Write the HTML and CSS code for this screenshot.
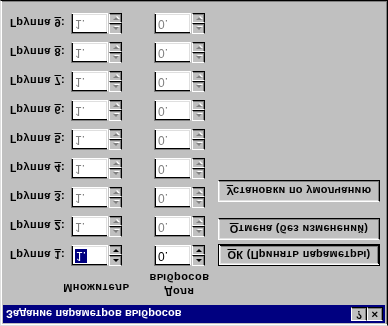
FILE: index.html
```html
<!DOCTYPE html>
<html lang="ru">
<head>
  <meta charset="UTF-8" />
  <title>Задание параметров выбросов</title>
  <link rel="stylesheet" href="styles.css">
</head>
<body>
  <div class="dialog">
    <div class="titlebar">
      <span class="title">Задание параметров выбросов</span>
      <div class="caption">
        <span class="cap-btn">?</span>
        <span class="cap-btn close">&#x2715;</span>
      </div>
    </div>

    <div class="content">
      <div class="groups">
        <div class="head">
          <span class="h-gap"></span>
          <span class="h-col h-mult">Множитель</span>
          <span class="h-col h-share">Доля<br>выбросов</span>
        </div>

        <div class="row">
          <span class="label">Группа <u>1</u>:</span>
          <div class="edit"><span class="sel">1.</span></div>
          <div class="spin"><span class="up"></span><span class="down"></span></div>
          <div class="edit second">0.</div>
          <div class="spin"><span class="up"></span><span class="down"></span></div>
        </div>
        <div class="row off">
          <span class="label">Группа <u>2</u>:</span>
          <div class="edit">1.</div>
          <div class="spin"><span class="up"></span><span class="down"></span></div>
          <div class="edit second">0.</div>
          <div class="spin"><span class="up"></span><span class="down"></span></div>
        </div>
        <div class="row off">
          <span class="label">Группа <u>3</u>:</span>
          <div class="edit">1.</div>
          <div class="spin"><span class="up"></span><span class="down"></span></div>
          <div class="edit second">0.</div>
          <div class="spin"><span class="up"></span><span class="down"></span></div>
        </div>
        <div class="row off">
          <span class="label">Группа <u>4</u>:</span>
          <div class="edit">1.</div>
          <div class="spin"><span class="up"></span><span class="down"></span></div>
          <div class="edit second">0.</div>
          <div class="spin"><span class="up"></span><span class="down"></span></div>
        </div>
        <div class="row off">
          <span class="label">Группа <u>5</u>:</span>
          <div class="edit">1.</div>
          <div class="spin"><span class="up"></span><span class="down"></span></div>
          <div class="edit second">0.</div>
          <div class="spin"><span class="up"></span><span class="down"></span></div>
        </div>
        <div class="row off">
          <span class="label">Группа <u>6</u>:</span>
          <div class="edit">1.</div>
          <div class="spin"><span class="up"></span><span class="down"></span></div>
          <div class="edit second">0.</div>
          <div class="spin"><span class="up"></span><span class="down"></span></div>
        </div>
        <div class="row off">
          <span class="label">Группа <u>7</u>:</span>
          <div class="edit">1.</div>
          <div class="spin"><span class="up"></span><span class="down"></span></div>
          <div class="edit second">0.</div>
          <div class="spin"><span class="up"></span><span class="down"></span></div>
        </div>
        <div class="row off">
          <span class="label">Группа <u>8</u>:</span>
          <div class="edit">1.</div>
          <div class="spin"><span class="up"></span><span class="down"></span></div>
          <div class="edit second">0.</div>
          <div class="spin"><span class="up"></span><span class="down"></span></div>
        </div>
        <div class="row off">
          <span class="label">Группа <u>9</u>:</span>
          <div class="edit">1.</div>
          <div class="spin"><span class="up"></span><span class="down"></span></div>
          <div class="edit second">0.</div>
          <div class="spin"><span class="up"></span><span class="down"></span></div>
        </div>
      </div>

      <div class="actions">
        <div class="btn default"><span><u>О</u>К (Принять параметры)</span></div>
        <div class="btn"><span><u>О</u>тмена (без изменений)</span></div>
        <div class="btn defaults"><span><u>У</u>становки по умолчанию</span></div>
      </div>
    </div>
  </div>
</body>
</html>
```

FILE: styles.css
```css
:root {
  --face: #c0c0c0;
  --light: #dfdfdf;
  --shadow: #808080;
  --dark: #000;
  --navy: #000080;
}

* {
  box-sizing: border-box;
}

body {
  margin: 0;
  background: var(--face);
  font-family: 'Liberation Sans', Arial, sans-serif;
  font-size: 11px;
  font-weight: bold;
  color: #000;
}

/* the capture is mirrored top-to-bottom */
.dialog {
  width: 388px;
  height: 326px;
  background: var(--face);
  border: 1px solid;
  border-color: var(--light) var(--dark) var(--dark) var(--light);
  box-shadow: inset 1px 1px #fff, inset -1px -1px var(--shadow);
  padding: 2px;
  transform: scaleY(-1);
}

.titlebar {
  height: 18px;
  background: var(--navy);
  color: #fff;
  display: flex;
  align-items: center;
  justify-content: space-between;
  padding: 0 2px 0 3px;
}

.title {
  font-size: 11px;
  letter-spacing: 0.1px;
}

.caption {
  display: flex;
}

.cap-btn {
  width: 16px;
  height: 14px;
  background: var(--face);
  color: #000;
  border: 1px solid;
  border-color: #fff var(--dark) var(--dark) #fff;
  box-shadow: inset -1px -1px var(--shadow);
  font-size: 10px;
  line-height: 12px;
  text-align: center;
}

.close {
  font-size: 9px;
}

.content {
  display: flex;
  padding: 6px 0 0 7px;
}

.groups {
  display: flex;
  flex-direction: column;
  gap: 8px;
}

.head {
  height: 30px;
  display: flex;
  margin-bottom: -5px;
  letter-spacing: 0.5px;
}

.h-gap {
  width: 61px;
}

.h-col {
  width: 51px;
  display: flex;
  justify-content: center;
  white-space: nowrap;
  text-align: center;
}

.h-mult {
  padding-top: 5px;
}

.h-share {
  margin-left: 32px;
  line-height: 14px;
}

.row {
  display: flex;
  align-items: center;
  height: 21px;
}

.label {
  width: 61px;
  letter-spacing: 0.5px;
}

.edit {
  width: 37px;
  height: 21px;
  background: #fff;
  border: 1px solid;
  border-color: var(--shadow) #fff #fff var(--shadow);
  box-shadow: inset 1px 1px var(--dark), inset -1px -1px var(--light);
  padding: 3px 0 0 3px;
  font-weight: normal;
  font-size: 12px;
  line-height: 13px;
}

.edit.second {
  margin-left: 32px;
}

.sel {
  background: var(--navy);
  color: #fff;
  padding: 0 1px;
}

.spin {
  width: 13px;
  height: 21px;
  margin-left: 1px;
  display: flex;
  flex-direction: column;
}

.up,
.down {
  flex: 1;
  background: var(--face);
  border: 1px solid;
  border-color: #fff var(--dark) var(--dark) #fff;
  box-shadow: inset -1px -1px var(--shadow);
  display: flex;
  align-items: center;
  justify-content: center;
}

.up::after,
.down::after {
  content: "";
  border-left: 3px solid transparent;
  border-right: 3px solid transparent;
}

.up::after {
  border-bottom: 3px solid var(--dark);
}

.down::after {
  border-top: 3px solid var(--dark);
}

.off .edit {
  color: var(--shadow);
  text-shadow: 1px 1px #fff;
}

.off .up::after {
  border-bottom-color: var(--shadow);
  filter: drop-shadow(1px 1px 0 #fff);
}

.off .down::after {
  border-top-color: var(--shadow);
  filter: drop-shadow(1px 1px 0 #fff);
}

.actions {
  display: flex;
  flex-direction: column;
  margin: 33px 0 0 13px;
}

.btn {
  width: 162px;
  height: 22px;
  border: 1px solid;
  border-color: #fff var(--dark) var(--dark) #fff;
  box-shadow: inset -1px -1px var(--shadow), inset 1px 1px var(--light);
  display: flex;
  align-items: center;
  justify-content: center;
  margin-bottom: 4px;
  letter-spacing: 0.3px;
}

.btn.default {
  border-color: var(--dark);
  box-shadow: inset 1px 1px #fff, inset -1px -1px var(--dark),
    inset 2px 2px var(--light), inset -2px -2px var(--shadow);
}

.btn.defaults {
  margin-top: 12px;
}
```
